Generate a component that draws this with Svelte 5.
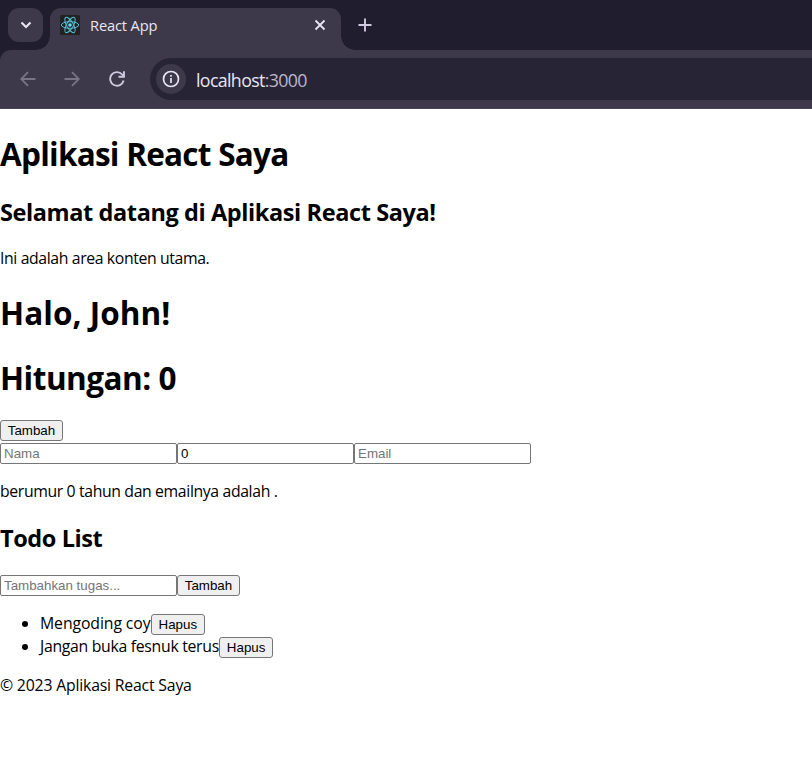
<script>
  let count = $state(0);
  let name = $state('');
  let age = $state(0);
  let email = $state('');
  let task = $state('');
  let todos = $state(['Mengoding coy', 'Jangan buka fesnuk terus']);

  function addTodo() {
    if (!task) return;
    todos.push(task);
    task = '';
  }
</script>

<div class="window">
  <div class="tabstrip">
    <div class="chevron">
      <svg width="12" height="8" viewBox="0 0 12 8"><path d="M1.5 1.5 6 6l4.500-4.500" fill="none" stroke="#e9e5f2" stroke-width="2.100" /></svg>
    </div>
    <div class="tab">
      <svg class="logo" width="20" height="20" viewBox="0 0 20 20">
        <rect width="20" height="20" rx="1.500" fill="#222222" />
        <g fill="none" stroke="#56bcd6" stroke-width="1">
          <ellipse cx="10" cy="10" rx="8.700" ry="3.300" />
          <ellipse cx="10" cy="10" rx="8.700" ry="3.300" transform="rotate(60 10 10)" />
          <ellipse cx="10" cy="10" rx="8.700" ry="3.300" transform="rotate(120 10 10)" />
        </g>
        <circle cx="10" cy="10" r="1.800" fill="#61dafb" />
      </svg>
      <span class="tab-title">React App</span>
      <svg class="close" width="12" height="12" viewBox="0 0 12 12"><path d="m1.500 1.500 9 9m0-9-9 9" stroke="#e9e5f2" stroke-width="1.800" /></svg>
    </div>
    <svg class="plus" width="14" height="14" viewBox="0 0 14 14"><path d="M7 .5v13M.5 7h13" stroke="#d0cae0" stroke-width="1.900" /></svg>
  </div>
  <div class="toolbar">
    <svg width="16" height="16" viewBox="0 0 16 16"><path d="M15.500 8H1.500M8 1.200 1.200 8 8 14.800" fill="none" stroke="#787385" stroke-width="1.800" /></svg>
    <svg class="fwd" width="16" height="16" viewBox="0 0 16 16"><path d="M.5 8h14M8 1.200 14.800 8 8 14.800" fill="none" stroke="#787385" stroke-width="1.800" /></svg>
    <svg class="reload" width="16" height="16" viewBox="0 0 16 16">
      <path d="M14.600 9.500A6.800 6.800 0 1 1 13.200 3.500L15 5.500" fill="none" stroke="#d0cae0" stroke-width="1.900" />
      <path d="M15.900.3v6.400H9.500V4.800H14V.3z" fill="#d0cae0" />
    </svg>
    <div class="address">
      <div class="info">
        <svg width="18" height="18" viewBox="0 0 18 18">
          <circle cx="9" cy="9" r="7.500" fill="none" stroke="#e9e5f2" stroke-width="1.700" />
          <path d="M9 8v5M9 5v1.800" stroke="#e9e5f2" stroke-width="1.700" />
        </svg>
      </div>
      <span class="url">localhost<span>:3000</span></span>
    </div>
  </div>
</div>

<main>
  <h1 class="t1">Aplikasi React Saya</h1>
  <h2 class="t2">Selamat datang di Aplikasi React Saya!</h2>
  <p class="intro">Ini adalah area konten utama.</p>
  <h1 class="t3">Halo, John!</h1>
  <h1 class="t4">Hitungan: {count}</h1>
  <div class="row counter"><button class="add" onclick={() => count++}>Tambah</button></div>
  <div class="row">
    <input placeholder="Nama" bind:value={name} />
    <input bind:value={age} />
    <input placeholder="Email" bind:value={email} />
  </div>
  <p class="summary">{name} berumur {age} tahun dan emailnya adalah {email}.</p>
  <h2 class="t5">Todo List</h2>
  <div class="row">
    <input placeholder="Tambahkan tugas..." bind:value={task} />
    <button class="add" onclick={addTodo}>Tambah</button>
  </div>
  <ul>
    {#each todos as todo, i}
      <li><span class="todo">{todo}</span><button class="del" onclick={() => todos.splice(i, 1)}>Hapus</button></li>
    {/each}
  </ul>
  <footer>© 2023 Aplikasi React Saya</footer>
</main>

<style>
  :global(body) { margin: 0; background: #fff; }
  .window { height: 109px; background: #1f1d2e; font-family: 'Open Sans', sans-serif; overflow: hidden; }
  .tabstrip { height: 50px; display: flex; align-items: flex-start; }
  .chevron { width: 35px; height: 34px; margin: 8px 7px 0 8px; border-radius: 11px; background: #3d394b; display: flex; align-items: center; justify-content: center; }
  .tab { position: relative; width: 291px; height: 42px; margin-top: 8px; background: #3d394b; border-radius: 11px 11px 0 0; box-sizing: border-box; display: flex; padding: 0 15px 0 10px; }
  .tab::before, .tab::after { content: ''; position: absolute; bottom: 0; width: 14px; height: 14px; }
  .tab::before { left: -14px; background: radial-gradient(circle at 0 0, transparent 13.500px, #3d394b 14px); }
  .tab::after { right: -14px; background: radial-gradient(circle at 100% 0, transparent 13.500px, #3d394b 14px); }
  .logo { margin-top: 7px; }
  .tab-title { margin: 7px 0 0 10px; font-size: 14.700px; line-height: 21px; color: #e9e5f2; letter-spacing: -.17px; }
  .close { margin: 11px 0 0 auto; }
  .plus { margin: 18px 0 0 17px; }
  .toolbar { height: 59px; background: #3d394b; border-radius: 11px 0 0 0; display: flex; align-items: center; padding-left: 20px; box-sizing: border-box; border-bottom: 1px solid #494557; }
  .fwd { margin-left: 28px; }
  .reload { margin-left: 29px; }
  .address { flex: 1; margin-left: 25px; height: 42px; background: #272435; border-radius: 21px 0 0 21px; display: flex; align-items: center; padding-left: 6px; }
  .info { width: 30px; height: 30px; border-radius: 15px; background: #3d394b; display: flex; align-items: center; justify-content: center; }
  .url { margin-left: 10px; padding-top: 1px; font-size: 17.800px; line-height: 24px; color: #e9e5f2; letter-spacing: -.64px; }
  .url span { color: #bcb7c9; }

  main { padding-top: 23px; font: 15.800px/21px 'Open Sans', sans-serif; color: #000; }
  h1, h2, p { margin: 0; white-space: nowrap; }
  h1 { font-size: 31.500px; line-height: 43px; }
  h2 { font-size: 23.500px; line-height: 32px; letter-spacing: -.4px; }
  .t1 { letter-spacing: -.75px; }
  .t2 { margin-top: 21px; }
  .intro { margin-top: 20px; letter-spacing: -.38px; }
  .t3 { margin-top: 22px; letter-spacing: .05px; }
  .t4 { margin-top: 22px; letter-spacing: -.5px; }
  .row { display: flex; height: 21px; }
  .counter { margin: 21px 0 2px; }
  .summary { margin-top: 17px; letter-spacing: -.37px; }
  .t5 { margin: 20px 0 21px; }
  input { box-sizing: border-box; width: 177px; height: 21px; margin: 0; border: 1px solid #767676; border-radius: 2px; padding: 1px 3px; font: 13.333px 'Liberation Sans', Arial, sans-serif; color: #000; background: #fff; }
  input::placeholder { color: #757575; }
  button { box-sizing: border-box; height: 21px; margin: 0; padding: 0; border: 1px solid #767676; border-radius: 3px; background: #efefef; color: #000; font: 13.333px 'Liberation Sans', Arial, sans-serif; }
  .add { width: 63px; }
  .del { width: 54.500px; }
  ul { margin: 17px 0 0; padding: 0 0 0 40px; }
  li { height: 23px; white-space: nowrap; line-height: 21px; }
  li .todo { display: inline-block; vertical-align: top; letter-spacing: -.3px; }
  li:first-child .todo { letter-spacing: -.1px; }
  li .del { vertical-align: top; margin-top: 1px; }
  footer { margin-top: 16px; letter-spacing: -.19px; }
</style>
